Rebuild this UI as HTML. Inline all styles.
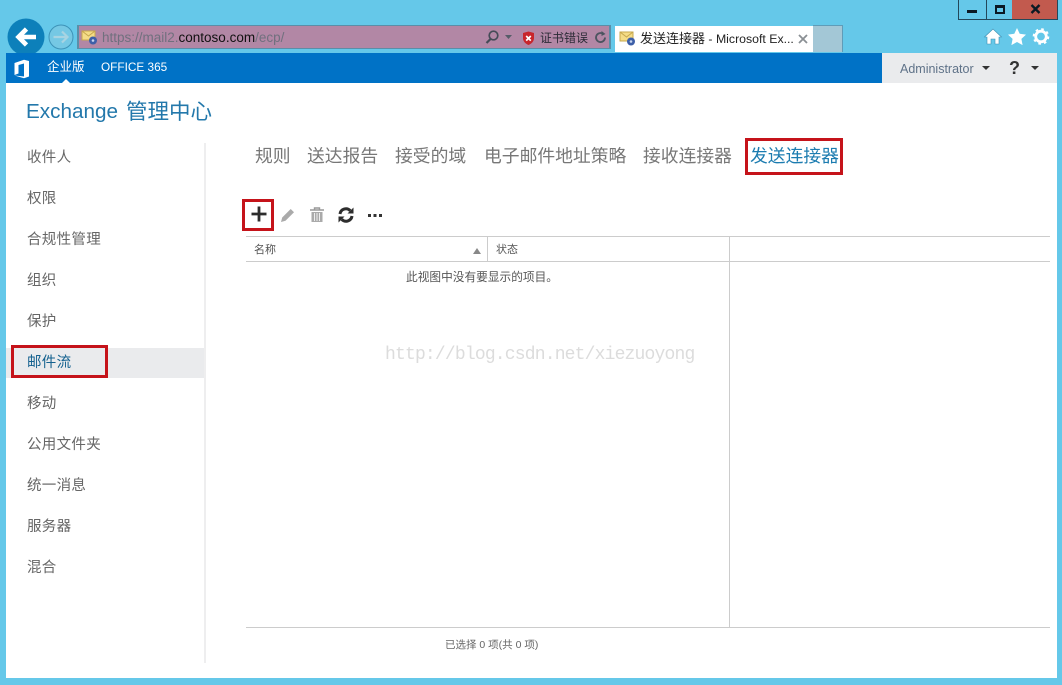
<!DOCTYPE html>
<html lang="zh"><head><meta charset="utf-8"><title>发送连接器 - Microsoft Exchange</title>
<style>
html,body{margin:0;padding:0}
body{width:1062px;height:685px;overflow:hidden;position:relative;background:#65c8e9;font-family:"Liberation Sans","Noto Sans CJK SC",sans-serif}
.a{position:absolute;white-space:nowrap}
.n{left:27px;font-size:14.500px;line-height:20px;color:#666;letter-spacing:.3px}
.t{top:144px;font-size:17.800px;line-height:24px;color:#777}
.r{border:3px solid #c5131a;box-sizing:border-box}
</style></head><body>
<!-- window controls -->
<div class="a" style="left:958px;top:0;width:100px;height:20px;box-sizing:border-box;border:1px solid #23485a;border-top:0;background:#65c8e9"></div>
<div class="a" style="left:986px;top:0;width:1px;height:19px;background:#23485a"></div>
<div class="a" style="left:1012px;top:0;width:45px;height:19px;background:#c25a4e"></div>
<div class="a" style="left:967px;top:10px;width:10px;height:3px;background:#0b1a24"></div>
<div class="a" style="left:995px;top:5px;width:10px;height:9px;box-sizing:border-box;border:2px solid #0b1a24;border-top-width:3px"></div>
<svg class="a" style="left:1030px;top:4px" width="11" height="10"><path d="M1.500 1l8 8M9.500 1l-8 8" stroke="#0b1a24" stroke-width="2.400"/></svg>
<!-- nav buttons -->
<svg class="a" style="left:7px;top:18px" width="70" height="38">
<circle cx="19" cy="19" r="18.500" fill="#0d80ba"/>
<path d="M29 19H12M19.500 11L11.500 19L19.500 27" fill="none" stroke="#fff" stroke-width="4.600"/>
<circle cx="54" cy="19" r="12" fill="#75c8e4" stroke="#3d93b8"/>
<path d="M46.500 19H60M55 13.500L60.500 19L55 24.500" fill="none" stroke="#a8d4e2" stroke-width="2.200"/>
</svg>
<!-- address bar -->
<div class="a" style="left:77px;top:25px;width:534px;height:24px;box-sizing:border-box;background:#b287a5;border:1px solid #5b8ea8;border-width:1px 2px"></div>
<svg class="a" style="left:81px;top:30px" width="18" height="16"><path d="M1 1h13v9H1z" fill="#f4dc87" stroke="#c7a84e"/><path d="M1 1l6.500 5L14 1" fill="none" stroke="#c7a84e"/><circle cx="12" cy="10.500" r="4" fill="#3d5fa8"/><circle cx="12" cy="10.500" r="1.300" fill="#c8d6ef"/></svg>
<div class="a" style="left:102px;top:29px;font-size:13.500px;line-height:18px;color:#70707e">https://mail2.<span style="color:#111">contoso.com</span>/ecp/</div>
<svg class="a" style="left:484px;top:29px" width="32" height="16"><circle cx="9.500" cy="6.500" r="4.300" fill="none" stroke="#444b57" stroke-width="1.700"/><path d="M6.500 10L2.500 14" stroke="#444b57" stroke-width="2.200"/><path d="M21 6h7l-3.500 4z" fill="#555c68"/></svg>
<svg class="a" style="left:521px;top:31px" width="15" height="15"><path d="M7.500.5L13 2v5c0 3.500-2.500 5.800-5.500 7C4.500 12.800 2 10.500 2 7V2z" fill="#c8252b"/><path d="M5.200 5l4.600 4.600M9.800 5L5.200 9.600" stroke="#fff" stroke-width="1.700"/></svg>
<div class="a" style="left:540px;top:29px;font-size:12px;line-height:18px;color:#2b2b36">证书错误</div>
<svg class="a" style="left:594px;top:30px" width="14" height="15"><path d="M11 7.500a4.500 4.500 0 1 1-2-3.700" fill="none" stroke="#4c5460" stroke-width="1.800"/><path d="M7.500 1L11.500 4L7.500 6z" fill="#4c5460"/></svg>
<!-- tabs -->
<div class="a" style="left:615px;top:26px;width:198px;height:26px;background:#fff"></div>
<div class="a" style="left:813px;top:25px;width:30px;height:27px;box-sizing:border-box;background:#a3c7d6;border:1px solid #5f9cb8;border-left:0;border-bottom:0"></div>
<svg class="a" style="left:619px;top:31px" width="18" height="16"><path d="M1 1h13v9H1z" fill="#f4dc87" stroke="#c7a84e"/><path d="M1 1l6.500 5L14 1" fill="none" stroke="#c7a84e"/><circle cx="12" cy="10.500" r="4" fill="#3d5fa8"/><circle cx="12" cy="10.500" r="1.300" fill="#c8d6ef"/></svg>
<div class="a" style="left:640px;top:30px;font-size:13px;line-height:18px;color:#222">发送连接器<span style="font-size:12.300px"> - Microsoft Ex...</span></div>
<svg class="a" style="left:798px;top:34px" width="10" height="10"><path d="M1 1l8 8M9 1l-8 8" stroke="#8a8f94" stroke-width="1.800"/></svg>
<!-- browser tools -->
<svg class="a" style="left:983px;top:27px" width="68" height="20">
<path d="M10 2L1.500 10H4v7h4v-5h4v5h4v-7h2.500z" fill="#fff" stroke="#3c8fb2" stroke-width=".6"/>
<path d="M34 1l2.700 5.800 6.300.8-4.600 4.300 1.200 6.200-5.600-3.100-5.600 3.100 1.200-6.200L25 7.600l6.300-.8z" fill="#fff"/>
<circle cx="58" cy="9.500" r="5.300" fill="none" stroke="#fff" stroke-width="2.800"/>
<circle cx="58" cy="9.500" r="7.300" fill="none" stroke="#fff" stroke-width="2" stroke-dasharray="2.600 3.130"/>
</svg>
<!-- page -->
<div class="a" style="left:6px;top:53px;width:1051px;height:625px;background:#fff"></div>
<div class="a" style="left:6px;top:53px;width:876px;height:30px;background:#0072c6"></div>
<div class="a" style="left:882px;top:53px;width:175px;height:30px;background:#eaebed"></div>
<svg class="a" style="left:13px;top:59px" width="18" height="20"><path d="M1.500 4L11 .8 16 2v15.500l-5 1.700-9.500-2.700 9.500 1V4.500L5.500 6v8.500L1.500 16z" fill="#fff"/></svg>
<div class="a" style="left:47px;top:58px;font-size:12.500px;line-height:18px;color:#fff">企业版</div>
<div class="a" style="left:101px;top:58px;font-size:11.800px;line-height:18px;color:#fff">OFFICE 365</div>
<svg class="a" style="left:60px;top:79px" width="12" height="4"><path d="M2 4L6 0l4 4z" fill="#fff"/></svg>
<div class="a" style="left:900px;top:60px;font-size:12.500px;line-height:18px;color:#5f7288">Administrator</div>
<svg class="a" style="left:982px;top:66px" width="9" height="5"><path d="M0 0h8L4 4z" fill="#333"/></svg>
<div class="a" style="left:1009px;top:57px;font-size:18px;line-height:22px;font-weight:bold;color:#333">?</div>
<svg class="a" style="left:1031px;top:66px" width="9" height="5"><path d="M0 0h8L4 4z" fill="#333"/></svg>
<div class="a" style="left:26px;top:97px;font-size:20.700px;line-height:30px;color:#2378ab">Exchange</div>
<div class="a" style="left:126px;top:97px;font-size:21.500px;line-height:30px;color:#2378ab">管理中心</div>
<!-- left nav -->
<div class="a" style="left:204px;top:143px;width:2px;height:520px;background:#eeeeef"></div>
<div class="a" style="left:6px;top:348px;width:198px;height:30px;background:#eaebed"></div>
<div class="a r" style="left:11px;top:345px;width:97px;height:33px"></div>
<div class="a n" style="top:148px">收件人</div>
<div class="a n" style="top:189px">权限</div>
<div class="a n" style="top:230px">合规性管理</div>
<div class="a n" style="top:271px">组织</div>
<div class="a n" style="top:312px">保护</div>
<div class="a n" style="top:353px;color:#14618f">邮件流</div>
<div class="a n" style="top:394px">移动</div>
<div class="a n" style="top:435px">公用文件夹</div>
<div class="a n" style="top:476px">统一消息</div>
<div class="a n" style="top:517px">服务器</div>
<div class="a n" style="top:558px">混合</div>
<!-- tabs in content -->
<div class="a t" style="left:255px">规则</div>
<div class="a t" style="left:307px">送达报告</div>
<div class="a t" style="left:395px">接受的域</div>
<div class="a t" style="left:484px">电子邮件地址策略</div>
<div class="a t" style="left:643px">接收连接器</div>
<div class="a t" style="left:750px;color:#1c7cb0">发送连接器</div>
<div class="a r" style="left:745px;top:138px;width:98px;height:37px"></div>
<!-- toolbar -->
<div class="a r" style="left:242px;top:199px;width:32px;height:32px"></div>
<svg class="a" style="left:250px;top:205px" width="18" height="18"><path d="M9 1.500v15M1.500 9h15" stroke="#2d2d2d" stroke-width="2.800"/></svg>
<svg class="a" style="left:280px;top:207px" width="16" height="16"><path d="M1 15l1.200-4.500 8.500-8.500 3.300 3.300-8.500 8.500z" fill="#aaa"/></svg>
<svg class="a" style="left:309px;top:207px" width="16" height="16"><path d="M1 3h14M5.500 3V1h5v2" fill="none" stroke="#999" stroke-width="1.400"/><path d="M2.500 5h11v10h-11z" fill="#aaa"/><path d="M5.500 6v8M8 6v8M10.500 6v8" stroke="#eee"/></svg>
<svg class="a" style="left:338px;top:207px" width="16" height="16"><path d="M2 7a6 6 0 0 1 10.300-3.300" fill="none" stroke="#2d2d2d" stroke-width="3"/><path d="M9.500 6.500L15.500 6.500V.5z" fill="#2d2d2d"/><path d="M14 9a6 6 0 0 1-10.300 3.300" fill="none" stroke="#2d2d2d" stroke-width="3"/><path d="M6.500 9.500H.5v6z" fill="#2d2d2d"/></svg>
<svg class="a" style="left:367px;top:213px" width="16" height="5"><path d="M1 1h3v3H1zM6.500 1h3v3h-3zM12 1h3v3h-3z" fill="#333"/></svg>
<!-- table -->
<div class="a" style="left:246px;top:236px;width:804px;height:1px;background:#ccc"></div>
<div class="a" style="left:246px;top:261px;width:804px;height:1px;background:#ccc"></div>
<div class="a" style="left:487px;top:237px;width:1px;height:24px;background:#ccc"></div>
<div class="a" style="left:729px;top:237px;width:1px;height:391px;background:#ccc"></div>
<div class="a" style="left:246px;top:627px;width:804px;height:1px;background:#ccc"></div>
<div class="a" style="left:254px;top:242px;font-size:11px;line-height:16px;color:#555">名称</div>
<svg class="a" style="left:473px;top:248px" width="9" height="6"><path d="M0 6L4 0l4 6z" fill="#888"/></svg>
<div class="a" style="left:496px;top:242px;font-size:11px;line-height:16px;color:#555">状态</div>
<div class="a" style="left:406px;top:270px;font-size:11.700px;line-height:16px;color:#555">此视图中没有要显示的项目。</div>
<div class="a" style="left:385px;top:345px;font-family:'Liberation Mono',monospace;font-size:18px;line-height:20px;letter-spacing:-.82px;color:#dcdcdc">http://blog.csdn.net/xiezuoyong</div>
<div class="a" style="left:445px;top:637px;font-size:10.500px;line-height:16px;color:#666">已选择 0 项(共 0 项)</div>
</body></html>
